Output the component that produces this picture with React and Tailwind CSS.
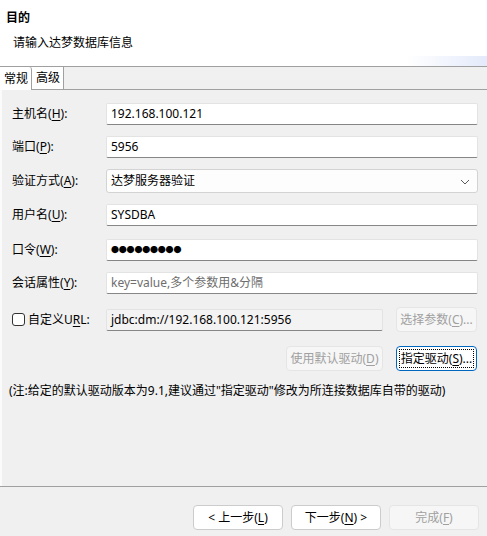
import React from "react";

const FONT = { fontFamily: '"Noto Sans", "Noto Sans CJK SC", sans-serif' };

// label with underlined mnemonic letter
function Label({ pre, k, post = "):" }) {
  return (
    <span>
      {pre}(<span className="underline underline-offset-2">{k}</span>
      {post}
    </span>
  );
}

function TextInput({ value, placeholder, disabled, wide = true, children }) {
  return (
    <div
      className={`h-[22px] flex items-center pl-[4px] border border-[#e3e3e3] border-b-[#868686] rounded-[2px] ${
        disabled ? "bg-[#f3f3f3] border-[#dedede] border-b-[#9a9a9a]" : "bg-white"
      } ${wide ? "flex-1" : "w-[277px]"}`}
    >
      {children ? (
        children
      ) : value ? (
        <span className="text-black">{value}</span>
      ) : (
        <span className="text-[#6e6e6e]">{placeholder}</span>
      )}
    </div>
  );
}

function Row({ label, className = "", children }) {
  return (
    <div className={`flex items-center ${className}`}>
      <div className="w-[94px] shrink-0">{label}</div>
      {children}
    </div>
  );
}

function Btn({ children, disabled, focused, className = "" }) {
  if (focused) {
    return (
      <div
        className={`h-[25px] rounded-[4px] border border-[#0067c0] bg-white p-[2px] ${className}`}
      >
        <div className="h-full w-full border border-dotted border-black flex items-center justify-center text-black">
          {children}
        </div>
      </div>
    );
  }
  return (
    <div
      className={`h-[25px] rounded-[4px] border flex items-center justify-center ${
        disabled
          ? "bg-[#f6f6f6] border-[#e5e5e5] text-[#a0a0a0]"
          : "bg-white border-[#cccccc] text-black"
      } ${className}`}
    >
      {children}
    </div>
  );
}

export default function App() {
  return (
    <div
      className="w-[487px] h-[536px] bg-[#f0f0f0] text-[12px] leading-[16px] text-black flex flex-col overflow-hidden"
      style={FONT}
    >
      {/* header */}
      <div className="h-[67px] bg-white border-b border-[#a0a0a0] shrink-0 relative">
        <div className="absolute right-0 bottom-0 w-[80px] h-[10px] bg-gradient-to-r from-white to-[#e4eafb]" />
        <div className="pl-[6px] pt-[10px] font-bold">目的</div>
        <div className="pl-[13px] pt-[9px]">请输入达梦数据库信息</div>
      </div>

      {/* tabs */}
      <div className="h-[23px] flex shrink-0">
        <div className="w-[32px] bg-white border-r border-[#a0a0a0] rounded-tr-[3px] flex items-center pl-[4px]">
          常规
        </div>
        <div className="w-[32px] bg-white border-r border-b border-[#a0a0a0] flex items-center pl-[4px]">
          高级
        </div>
        <div className="flex-1 border-b border-[#a0a0a0]" />
      </div>

      {/* panel */}
      <div className="flex-1 border-l-2 border-white/70 pl-[10px] pr-[9px] pt-[13px]">
        <Row label={<Label pre="主机名" k="H" />}>
          <TextInput value="192.168.100.121" />
        </Row>
        <Row label={<Label pre="端口" k="P" />} className="mt-[11px]">
          <TextInput value="5956" />
        </Row>
        <Row label={<Label pre="验证方式" k="A" />} className="mt-[11px]">
          <div className="flex-1 h-[24px] flex items-center pl-[4px] pr-[7px] bg-[#fdfdfd] border border-[#d3d3d3] rounded-[3px]">
            <span className="flex-1">达梦服务器验证</span>
            <svg width="10" height="6" viewBox="0 0 10 6" className="mt-[1px]">
              <path d="M1 1 L5 5 L9 1" fill="none" stroke="#5a5a5a" strokeWidth="1" />
            </svg>
          </div>
        </Row>
        <Row label={<Label pre="用户名" k="U" />} className="mt-[11px]">
          <TextInput value="SYSDBA" />
        </Row>
        <Row label={<Label pre="口令" k="W" />} className="mt-[13px]">
          <TextInput>
            <span className="text-[8px] tracking-[-0.2px] font-bold">●●●●●●●●●</span>
          </TextInput>
        </Row>
        <Row label={<Label pre="会话属性" k="Y" />} className="mt-[11px]">
          <TextInput placeholder="key=value,多个参数用&分隔" />
        </Row>
        <Row
          className="mt-[13px]"
          label={
            <div className="flex items-center">
              <div className="w-[13px] h-[13px] border border-[#333] rounded-[3px] bg-white mr-[3px]" />
              <span>
                自定义U<span className="underline underline-offset-2">R</span>L:
              </span>
            </div>
          }
        >
          <TextInput value="jdbc:dm://192.168.100.121:5956" disabled wide={false} />
          <Btn disabled className="ml-[13px] w-[81px] h-[23px]">
            选择参数(<span className="underline underline-offset-2">C</span>)...
          </Btn>
        </Row>
        <div className="flex justify-end mt-[14px] pr-[1px]">
          <Btn disabled className="w-[97px]">
            使用默认驱动(<span className="underline underline-offset-2">D</span>)
          </Btn>
          <Btn focused className="ml-[13px] w-[81px]">
            指定驱动(<span className="underline underline-offset-2">S</span>)...
          </Btn>
        </div>
        <div className="mt-[12px] -ml-[3px]">
          (注:给定的默认驱动版本为9.1,建议通过"指定驱动"修改为所连接数据库自带的驱动)
        </div>
      </div>

      {/* footer */}
      <div className="h-[50px] shrink-0 border-t border-[#a0a0a0] flex justify-end items-start pt-[18px] pr-[8px] gap-[8px]">
        <Btn className="w-[90px]">
          &lt; 上一步(<span className="underline underline-offset-2">L</span>)
        </Btn>
        <Btn className="w-[90px]">
          下一步(<span className="underline underline-offset-2">N</span>) &gt;
        </Btn>
        <Btn disabled className="w-[90px]">
          完成(<span className="underline underline-offset-2">F</span>)
        </Btn>
      </div>
    </div>
  );
}
